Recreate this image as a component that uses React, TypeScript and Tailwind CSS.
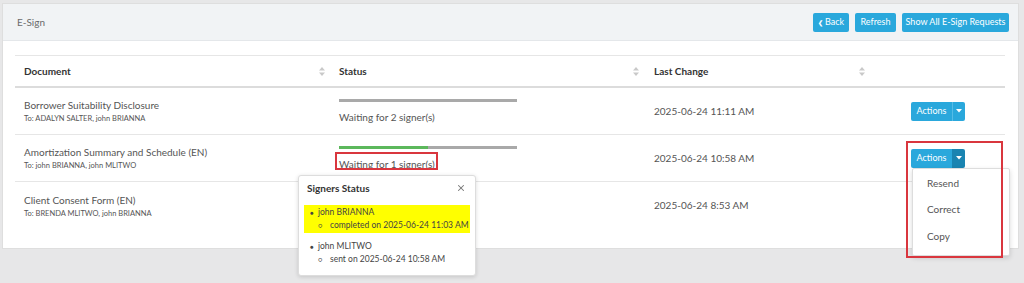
import { X } from "lucide-react";

const font = { fontFamily: "Lato, 'Open Sans', sans-serif" };

function SortIcon() {
  return (
    <svg width="6" height="9" viewBox="0 0 6 9" className="shrink-0">
      <path d="M3 0 L6 3.5 H0 Z" fill="#c9c9c9" />
      <path d="M3 9 L6 5.5 H0 Z" fill="#c9c9c9" />
    </svg>
  );
}

function Caret() {
  return (
    <svg width="6" height="4" viewBox="0 0 6 4">
      <path d="M0 0 H6 L3 3.5 Z" fill="#ffffff" />
    </svg>
  );
}

function ActionsButton({ open }: { open?: boolean }) {
  return (
    <div className="flex h-[19px] w-[54px] overflow-hidden rounded-[2px] text-[9px] text-white">
      <div className="flex flex-1 items-center justify-center bg-[#2aa8dc]">Actions</div>
      <div
        className={
          open
            ? "flex w-[13px] items-center justify-center bg-[#1a84b1]"
            : "flex w-[13px] items-center justify-center border-l border-[#55bce6] bg-[#2aa8dc]"
        }
      >
        <Caret />
      </div>
    </div>
  );
}

const rows = [
  {
    title: "Borrower Suitability Disclosure",
    to: "To: ADALYN SALTER, john BRIANNA",
    status: "Waiting for 2 signer(s)",
    done: 0,
    date: "2025-06-24 11:11 AM",
    open: false,
  },
  {
    title: "Amortization Summary and Schedule (EN)",
    to: "To: john BRIANNA, john MLITWO",
    status: "Waiting for 1 signer(s)",
    done: 50,
    date: "2025-06-24 10:58 AM",
    open: true,
  },
  {
    title: "Client Consent Form (EN)",
    to: "To: BRENDA MLITWO, john BRIANNA",
    status: "",
    done: 0,
    date: "2025-06-24 8:53 AM",
    open: false,
  },
];

export default function App() {
  return (
    <div className="relative h-[283px] w-[1024px] overflow-hidden bg-[#e7e7e8] text-[#555]" style={font}>
      {/* Panel */}
      <div className="ml-[2px] mt-[3px] h-[246px] w-[1017px] border border-[#dedede] bg-white">
        <div className="flex h-[37px] items-center justify-between border-b border-[#e4e7ea] bg-[#f1f3f5] pl-[14px] pr-[9px]">
          <span className="text-[10px] text-[#6b6b6b]">E-Sign</span>
          <div className="flex items-center gap-[6px] text-[9px] text-white">
            <button className="flex h-[19px] w-[36px] items-center justify-center gap-[2px] rounded-[2px] bg-[#2aa8dc]">
              <span className="text-[6px] font-bold">&#10094;</span>Back
            </button>
            <button className="h-[19px] w-[41px] rounded-[2px] bg-[#2aa8dc]">Refresh</button>
            <button className="h-[19px] w-[107px] rounded-[2px] bg-[#2aa8dc]">Show All E-Sign Requests</button>
          </div>
        </div>

        <div className="px-[12px] pt-[14px]">
          <div className="w-[990px] border-t border-[#e6e6e6]">
            {/* Header row */}
            <div className="flex h-[32px] items-center border-b-2 border-[#dcdcdc] text-[10px] font-bold text-[#333]">
              <div className="flex w-[315px] items-center justify-between pl-[9px] pr-[5px]">
                <span>Document</span>
                <SortIcon />
              </div>
              <div className="flex w-[315px] items-center justify-between pl-[9px] pr-[6px]">
                <span>Status</span>
                <SortIcon />
              </div>
              <div className="flex w-[225px] items-center justify-between pl-[9px] pr-[5px]">
                <span>Last Change</span>
                <SortIcon />
              </div>
              <div className="flex-1" />
            </div>

            {rows.map((r, i) => (
              <div
                key={r.title}
                className={i < rows.length - 1 ? "flex h-[47px] border-b border-[#e6e6e6]" : "flex h-[47px]"}
              >
                <div className="flex w-[315px] flex-col justify-center pl-[9px]">
                  <div className="text-[10px] leading-[14px] text-[#555]">{r.title}</div>
                  <div className="mt-[2px] text-[7.5px] leading-[10px] text-[#555]">{r.to}</div>
                </div>
                <div className="flex w-[315px] flex-col pl-[9px] pt-[11px]">
                  {r.status && (
                    <>
                      <div className="flex h-[3px] w-[178px] bg-[#a9a9a9]">
                        <div className="h-full bg-[#5cb85c]" style={{ width: `${r.done}%` }} />
                      </div>
                      <div className="mt-[9px] text-[10px] leading-[12px]">{r.status}</div>
                    </>
                  )}
                </div>
                <div className="flex w-[225px] items-center pl-[9px] text-[10px]">{r.date}</div>
                <div className="flex flex-1 items-center pl-[41px]">{i < 2 && <ActionsButton open={r.open} />}</div>
              </div>
            ))}
          </div>
        </div>
      </div>

      {/* Red highlight on status */}
      <div className="absolute left-[335px] top-[152px] h-[18px] w-[103px] border-2 border-[#d9363e]" />

      {/* Signers Status popover */}
      <div className="absolute left-[298px] top-[175px] h-[101px] w-[178px] rounded-[3px] border border-[#dddddd] bg-white shadow-[0_1px_4px_rgba(0,0,0,0.15)]">
        <div className="flex h-[24px] items-center justify-between pl-[8px] pr-[9px]">
          <span className="text-[10px] font-bold text-[#333]">Signers Status</span>
          <X size={10} strokeWidth={2.5} color="#777" />
        </div>
        <div className="whitespace-nowrap px-[5px] pt-[5px] text-[8.5px] text-[#444]">
          <div className="bg-[#ffff00] py-[1px] pl-[6px]">
            <div className="flex h-[13px] items-center">
              <span className="w-[8px] text-[6px]">&#9679;</span>
              <span>john BRIANNA</span>
            </div>
            <div className="flex h-[13px] items-center pl-[8px]">
              <span className="w-[12px] text-[7px]">&#9675;</span>
              <span>completed on 2025-06-24 11:03 AM</span>
            </div>
          </div>
          <div className="mt-[7px] pl-[6px]">
            <div className="flex h-[13px] items-center">
              <span className="w-[8px] text-[6px]">&#9679;</span>
              <span>john MLITWO</span>
            </div>
            <div className="flex h-[13px] items-center pl-[8px]">
              <span className="w-[12px] text-[7px]">&#9675;</span>
              <span>sent on 2025-06-24 10:58 AM</span>
            </div>
          </div>
        </div>
      </div>

      {/* Actions dropdown menu */}
      <div className="absolute left-[912px] top-[168px] flex h-[88px] w-[98px] flex-col rounded-[2px] border border-[#dddddd] bg-white pl-[14px] pt-[7px] text-[10px] text-[#555] shadow-[0_2px_5px_rgba(0,0,0,0.15)]">
        <div className="h-[29px] leading-[14px]">Resend</div>
        <div className="h-[29px] leading-[14px]">Correct</div>
        <div className="h-[29px] leading-[14px]">Copy</div>
      </div>

      {/* Red highlight on actions */}
      <div className="absolute left-[906px] top-[141px] h-[117px] w-[97px] border-2 border-[#d9363e]" />
    </div>
  );
}
